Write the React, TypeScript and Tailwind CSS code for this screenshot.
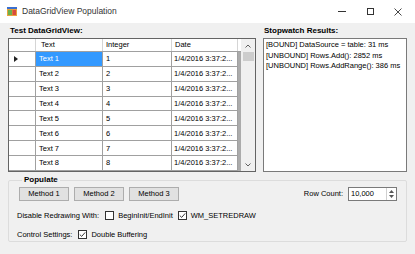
import React from "react";

type Row = { text: string; num: number; date: string };

const rows: Row[] = Array.from({ length: 8 }, (_, i) => ({
  text: `Text ${i + 1}`,
  num: i + 1,
  date: "1/4/2016 3:37:2...",
}));

function CheckBox({ checked }: { checked?: boolean }) {
  return (
    <span className="w-[9px] h-[9px] border border-[#333] bg-white flex items-center justify-center">
      {checked && (
        <svg width="7" height="7" viewBox="0 0 7 7">
          <path d="M0.8 3.6 L2.7 5.4 L6.2 1.4" fill="none" stroke="#222" strokeWidth="0.9" />
        </svg>
      )}
    </span>
  );
}

function Button({ label }: { label: string }) {
  return (
    <div className="w-[50px] h-[14px] bg-[#e1e1e1] border border-[#adadad] flex items-center justify-center">
      {label}
    </div>
  );
}

export default function App() {
  return (
    <div
      className="w-[415px] h-[254px] bg-[#f0f0f0] flex flex-col text-[7.5px] text-black overflow-hidden"
      style={{ fontFamily: '"Liberation Sans", Arial, sans-serif' }}
    >
      {/* title bar */}
      <div className="h-[23px] bg-white flex items-center shrink-0">
        <svg className="ml-[7px]" width="10" height="9" viewBox="0 0 10 9">
          <rect x="0" y="0" width="10" height="9" fill="#e8a23c" />
          <rect x="0" y="0" width="10" height="2" fill="#3a6fd0" />
          <rect x="1" y="3" width="4" height="5" fill="#6fb04a" />
          <rect x="5.5" y="3" width="3.5" height="5" fill="#d94b3b" />
        </svg>
        <span className="ml-[5px] text-[8.5px] text-[#333]">DataGridView Population</span>
        <div className="ml-auto flex items-center">
          <div className="w-[28px] flex justify-center">
            <div className="w-[8px] h-px bg-[#333]" />
          </div>
          <div className="w-[28px] flex justify-center">
            <div className="w-[7px] h-[7px] border border-[#333]" />
          </div>
          <div className="w-[28px] flex justify-center mr-[3px]">
            <svg width="8" height="8" viewBox="0 0 8 8">
              <path d="M0.5 0.5 L7.5 7.5 M7.5 0.5 L0.5 7.5" stroke="#333" strokeWidth="0.9" />
            </svg>
          </div>
        </div>
      </div>

      <div className="flex px-[8px] gap-[7px] shrink-0">
        {/* grid */}
        <div className="w-[248px] flex flex-col">
          <div className="h-[15px] flex items-center pl-[2px] font-bold text-[8px]">Test DataGridView:</div>
          <div className="h-[134px] border border-[#646464] bg-[#ababab] flex">
            <div className="flex flex-col w-[232px]">
              <div className="h-[13px] flex bg-white border-b border-[#a0a0a0]">
                <div className="w-[27px] border-r border-[#d5d5d5]" />
                <div className="w-[67px] border-r border-[#d5d5d5] pl-[5px] flex items-center">Text</div>
                <div className="w-[69px] border-r border-[#d5d5d5] pl-[3px] flex items-center">Integer</div>
                <div className="w-[66px] border-r border-[#d5d5d5] pl-[3px] flex items-center">Date</div>
                <div className="flex-1" />
              </div>
              {rows.map((r, i) => (
                <div key={r.text} className="h-[15px] flex">
                  <div className="w-[27px] bg-white border-r border-b border-[#a0a0a0] flex items-center pl-[5px]">
                    {i === 0 && (
                      <svg width="4" height="6" viewBox="0 0 4 6">
                        <path d="M0 0 L4 3 L0 6 Z" fill="#222" />
                      </svg>
                    )}
                  </div>
                  <div
                    className={`w-[67px] border-r border-b border-[#a0a0a0] pl-[3px] flex items-center ${
                      i === 0 ? "bg-[#3399ff] text-white" : "bg-white"
                    }`}
                  >
                    {r.text}
                  </div>
                  <div className="w-[69px] bg-white border-r border-b border-[#a0a0a0] pl-[3px] flex items-center">
                    {r.num}
                  </div>
                  <div className="w-[66px] bg-white border-r border-b border-[#a0a0a0] pl-[2px] flex items-center">
                    {r.date}
                  </div>
                </div>
              ))}
            </div>
            {/* scrollbar */}
            <div className="flex-1 bg-[#f0f0f0] flex flex-col items-center">
              <div className="h-[13px] flex items-center justify-center">
                <svg width="6" height="4" viewBox="0 0 6 4">
                  <path d="M0.5 3.5 L3 1 L5.5 3.5" fill="none" stroke="#606060" strokeWidth="1" />
                </svg>
              </div>
              <div className="w-[11px] h-[9px] bg-[#cdcdcd]" />
              <div className="flex-1" />
              <div className="h-[13px] flex items-center justify-center">
                <svg width="6" height="4" viewBox="0 0 6 4">
                  <path d="M0.5 0.5 L3 3 L5.5 0.5" fill="none" stroke="#606060" strokeWidth="1" />
                </svg>
              </div>
            </div>
          </div>
        </div>

        {/* results */}
        <div className="flex-1 flex flex-col">
          <div className="h-[15px] flex items-center pl-[1px] font-bold text-[8px]">Stopwatch Results:</div>
          <div className="h-[134px] border border-[#7a7a7a] bg-white px-[2px] pt-[1px] leading-[10.5px]">
            <div>[BOUND] DataSource = table: 31 ms</div>
            <div>[UNBOUND] Rows.Add(): 2852 ms</div>
            <div>[UNBOUND] Rows.AddRange(): 386 ms</div>
          </div>
        </div>
      </div>

      {/* populate group */}
      <fieldset className="mx-[8px] mt-[2px] h-[68px] border border-[#dcdcdc] rounded-[2px] px-[8px] pb-[6px]">
        <legend className="ml-[5px] px-[2px] font-bold text-[8px]">Populate</legend>
        <div className="flex items-center mt-[1px]">
          <div className="flex gap-[5px] ml-[2px]">
            <Button label="Method 1" />
            <Button label="Method 2" />
            <Button label="Method 3" />
          </div>
          <span className="ml-auto mr-[5px]">Row Count:</span>
          <div className="w-[49px] h-[14px] border border-[#7a7a7a] bg-white flex mr-[1px]">
            <span className="flex-1 pl-[2px] flex items-center">10,000</span>
            <div className="w-[10px] border-l border-[#d0d0d0] flex flex-col items-center justify-center gap-[2px]">
              <svg width="5" height="3" viewBox="0 0 5 3">
                <path d="M0 3 L2.5 0 L5 3 Z" fill="#555" />
              </svg>
              <svg width="5" height="3" viewBox="0 0 5 3">
                <path d="M0 0 L2.5 3 L5 0 Z" fill="#555" />
              </svg>
            </div>
          </div>
        </div>
        <div className="flex items-center mt-[9px]">
          <span>Disable Redrawing With:</span>
          <span className="ml-[6px]"><CheckBox /></span>
          <span className="ml-[4px]">BeginInit/EndInit</span>
          <span className="ml-[5px]"><CheckBox checked /></span>
          <span className="ml-[4px]">WM_SETREDRAW</span>
        </div>
        <div className="flex items-center mt-[8px]">
          <span>Control Settings:</span>
          <span className="ml-[6px]"><CheckBox checked /></span>
          <span className="ml-[4px]">Double Buffering</span>
        </div>
      </fieldset>
    </div>
  );
}
